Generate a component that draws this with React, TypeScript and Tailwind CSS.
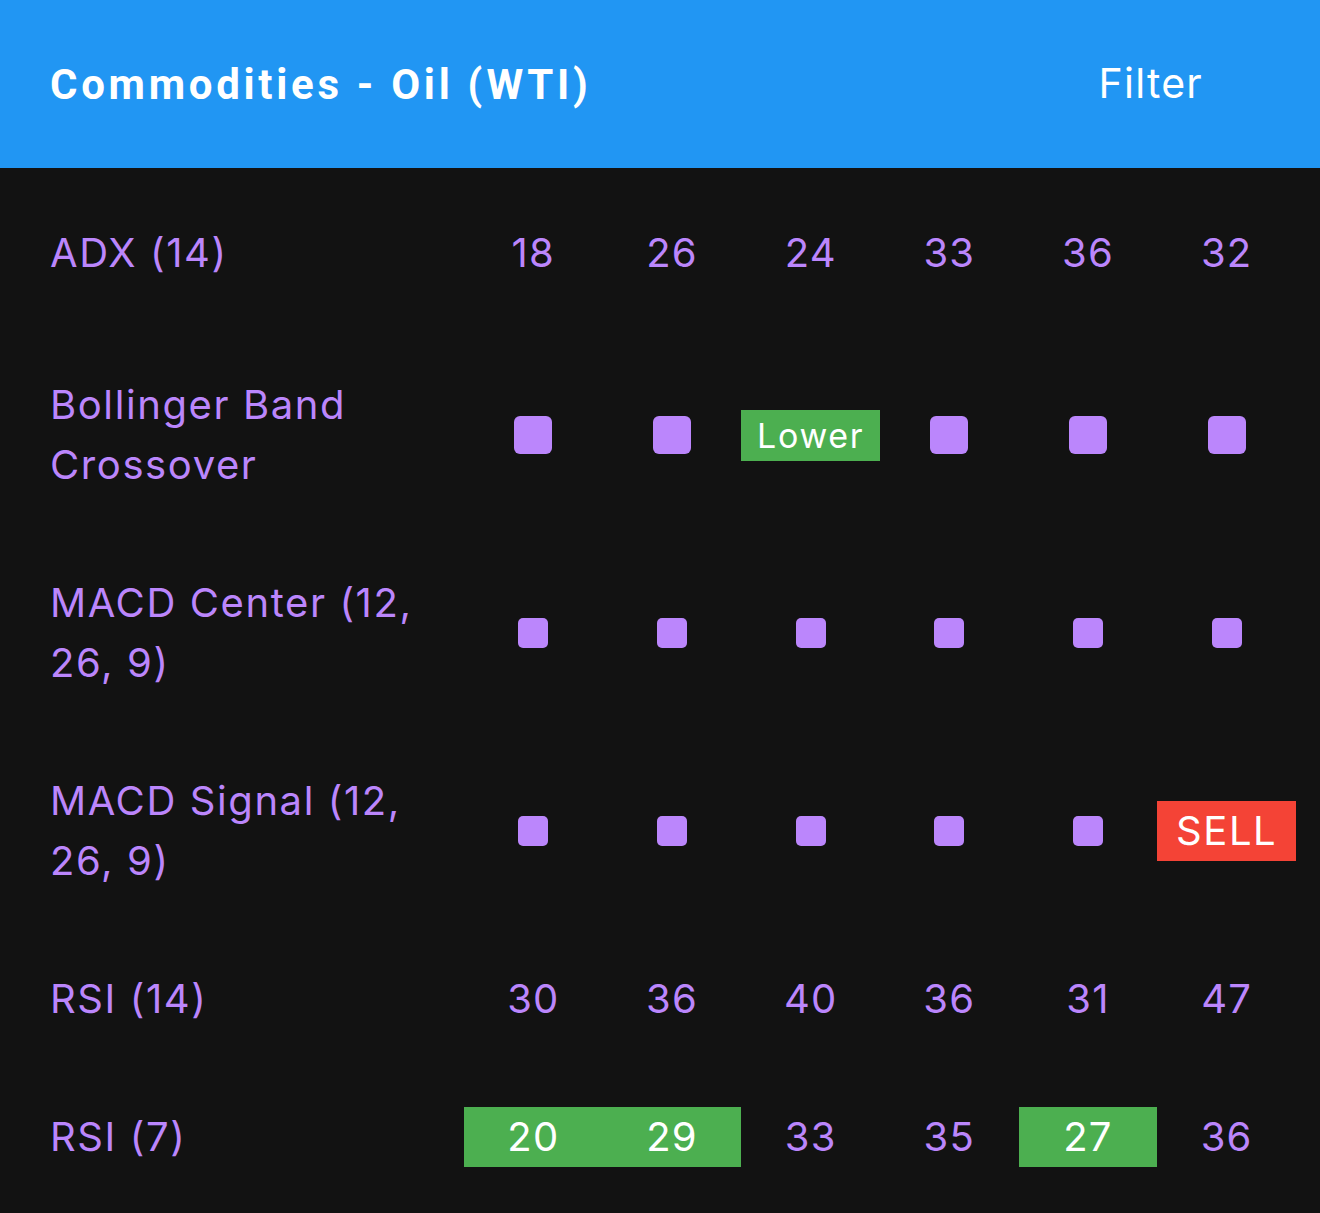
import React from "react";

type Cell =
  | { kind: "num"; v: string; hl?: "green" }
  | { kind: "sq"; size: "lg" | "sm" }
  | { kind: "tag"; v: string; color: "green" | "red"; small?: boolean };

type Row = { label: string; cells: Cell[]; cls: string };

const n = (v: string, hl?: "green"): Cell => ({ kind: "num", v, hl });
const sqL: Cell = { kind: "sq", size: "lg" };
const sqS: Cell = { kind: "sq", size: "sm" };

const rows: Row[] = [
  { label: "ADX (14)", cells: [n("18"), n("26"), n("24"), n("33"), n("36"), n("32")], cls: "pt-[39px] pb-[53px]" },
  {
    label: "Bollinger Band Crossover",
    cells: [sqL, sqL, { kind: "tag", v: "Lower", color: "green", small: true }, sqL, sqL, sqL],
    cls: "py-[39px]",
  },
  { label: "MACD Center (12, 26, 9)", cells: [sqS, sqS, sqS, sqS, sqS, sqS], cls: "py-[39px]" },
  {
    label: "MACD Signal (12, 26, 9)",
    cells: [sqS, sqS, sqS, sqS, sqS, { kind: "tag", v: "SELL", color: "red" }],
    cls: "py-[39px]",
  },
  { label: "RSI (14)", cells: [n("30"), n("36"), n("40"), n("36"), n("31"), n("47")], cls: "py-[39px]" },
  {
    label: "RSI (7)",
    cells: [n("20", "green"), n("29", "green"), n("33"), n("35"), n("27", "green"), n("36")],
    cls: "py-[39px]",
  },
];

function CellView({ c }: { c: Cell }) {
  if (c.kind === "num") {
    if (c.hl === "green") {
      return (
        <div className="flex h-[60px] w-full items-center justify-center bg-[#4CAF50] tracking-[0.03em] text-white">
          {c.v}
        </div>
      );
    }
    return (
      <div className="flex h-[60px] w-full items-center justify-center tracking-[0.03em] text-[#BB86FC]">{c.v}</div>
    );
  }
  if (c.kind === "sq") {
    return (
      <div className="flex w-full items-center justify-center">
        {c.size === "lg" ? (
          <div className="h-[38px] w-[38px] rounded-[6px] bg-[#BB86FC]" />
        ) : (
          <div className="h-[30px] w-[30px] rounded-[5px] bg-[#BB86FC]" />
        )}
      </div>
    );
  }
  if (c.small) {
    return (
      <div className="flex h-[51px] w-full items-center justify-center bg-[#4CAF50] text-[34px] leading-[51px] tracking-[0.05em] text-white">
        {c.v}
      </div>
    );
  }
  return (
    <div
      className={
        "flex h-[60px] w-full items-center justify-center tracking-[0.04em] text-white " +
        (c.color === "red" ? "bg-[#F44336]" : "bg-[#4CAF50]")
      }
    >
      {c.v}
    </div>
  );
}

export default function App() {
  return (
    <div className="min-h-screen bg-[#121212] font-['Inter','Liberation_Sans',sans-serif]">
      <header className="flex h-[168px] items-center justify-between bg-[#2196F3] pl-[50px] pr-[117px]">
        <h1 className="font-['Roboto','Liberation_Sans',sans-serif] text-[42px] font-bold tracking-[0.088em] text-white">
          Commodities - Oil (WTI)
        </h1>
        <button className="text-[41px] tracking-[0.03em] text-white">Filter</button>
      </header>
      <div className="pt-[16px] pl-[50px] pr-[24px] text-[40px] leading-[60px]">
        {rows.map((r) => (
          <div key={r.label} className={"grid grid-cols-[414px_repeat(6,1fr)] items-center " + r.cls}>
            <div className="pr-[20px] tracking-[0.04em] text-[#BB86FC]">{r.label}</div>
            {r.cells.map((c, i) => (
              <CellView key={i} c={c} />
            ))}
          </div>
        ))}
      </div>
    </div>
  );
}
